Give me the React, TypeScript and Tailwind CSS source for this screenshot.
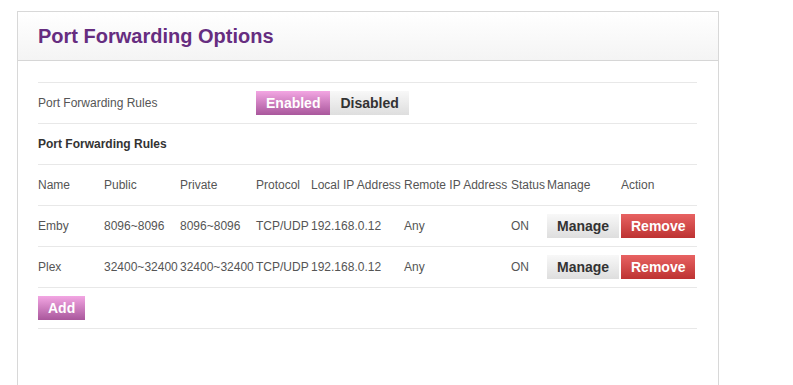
import React from "react";

type Rule = {
  name: string;
  pub: string;
  priv: string;
  protocol: string;
  local: string;
  remote: string;
  status: string;
};

const rules: Rule[] = [
  { name: "Emby", pub: "8096~8096", priv: "8096~8096", protocol: "TCP/UDP", local: "192.168.0.12", remote: "Any", status: "ON" },
  { name: "Plex", pub: "32400~32400", priv: "32400~32400", protocol: "TCP/UDP", local: "192.168.0.12", remote: "Any", status: "ON" },
];

const cols = "grid grid-cols-[66px_76px_76px_55px_93px_107px_36px_74px_76px] items-center";
const row = "h-[41px] border-t border-[#e8e8e8]";

const purpleBtn =
  "h-6 px-[10px] text-[14px] font-bold text-white bg-gradient-to-b from-[#f3a6e3] to-[#a9579c] leading-6";
const grayBtn =
  "h-6 px-[10px] text-[14px] font-bold text-[#333] bg-gradient-to-b from-[#f8f8f8] to-[#dedede] leading-6";
const redBtn =
  "h-6 px-[10px] text-[14px] font-bold text-white bg-gradient-to-b from-[#e86262] to-[#bd3232] leading-6";

export default function App() {
  return (
    <div className="h-[385px] overflow-hidden bg-white pl-[17px] pt-[11px] font-['Liberation_Sans',Arial,sans-serif] text-[12px] text-[#555]">
      <div className="h-[400px] w-[702px] border border-[#d8d8d8]">
        <div className="flex h-[49px] items-center border-b border-[#d6d6d6] bg-gradient-to-b from-white to-[#f4f4f4] pl-[20px]">
          <h1 className="text-[20px] font-bold text-[#662d80]">Port Forwarding Options</h1>
        </div>

        <div className="ml-[20px] mr-[21px] mt-[21px] border-b border-[#e8e8e8]">
          <div className={`${row} flex items-center`}>
            <span className="w-[218px]">Port Forwarding Rules</span>
            <div className="flex">
              <button className={purpleBtn}>Enabled</button>
              <button className={grayBtn}>Disabled</button>
            </div>
          </div>

          <div className={`${row} flex items-center font-bold text-[#333]`}>Port Forwarding Rules</div>

          <div className={`${row} ${cols}`}>
            <span>Name</span>
            <span>Public</span>
            <span>Private</span>
            <span>Protocol</span>
            <span>Local IP Address</span>
            <span>Remote IP Address</span>
            <span>Status</span>
            <span>Manage</span>
            <span>Action</span>
          </div>

          {rules.map((r) => (
            <div key={r.name} className={`${row} ${cols} whitespace-nowrap`}>
              <span>{r.name}</span>
              <span>{r.pub}</span>
              <span>{r.priv}</span>
              <span>{r.protocol}</span>
              <span>{r.local}</span>
              <span>{r.remote}</span>
              <span>{r.status}</span>
              <span>
                <button className={grayBtn}>Manage</button>
              </span>
              <span>
                <button className={redBtn}>Remove</button>
              </span>
            </div>
          ))}

          <div className={`${row} flex items-center`}>
            <button className={purpleBtn}>Add</button>
          </div>
        </div>
      </div>
    </div>
  );
}
